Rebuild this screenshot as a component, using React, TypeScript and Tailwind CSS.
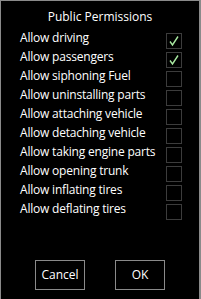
import React from "react";

const perms: { label: string; on: boolean }[] = [
  { label: "Allow driving", on: true },
  { label: "Allow passengers", on: true },
  { label: "Allow siphoning Fuel", on: false },
  { label: "Allow uninstalling parts", on: false },
  { label: "Allow attaching vehicle", on: false },
  { label: "Allow detaching vehicle", on: false },
  { label: "Allow taking engine parts", on: false },
  { label: "Allow opening trunk", on: false },
  { label: "Allow inflating tires", on: false },
  { label: "Allow deflating tires", on: false },
];

const Check: React.FC<{ on: boolean }> = ({ on }) => (
  <div className="w-[16px] h-[16px] border border-[#3c3c3c] flex items-center justify-center">
    {on && (
      <svg width="12" height="12" viewBox="0 0 12 12">
        <path d="M2 6.5 L4.5 10 L10 1.5" fill="none" stroke="#a8e8a0" strokeWidth="1.4" />
      </svg>
    )}
  </div>
);

const App: React.FC = () => {
  return (
    <div className="w-[201px] h-[299px] bg-black border-l border-t border-r-2 border-[#8a8a8a] text-white flex flex-col font-['Open_Sans',sans-serif] text-[12px] leading-[16px]">
      {/* Title */}
      <div className="text-center mt-[8px] h-[16px]">Public Permissions</div>

      {/* Permission rows */}
      <div className="flex flex-col mt-[6px] pl-[19px] pr-[17px]">
        {perms.map((p) => (
          <div key={p.label} className="flex items-center justify-between h-[19px]">
            <span className="tracking-[-0.2px] mb-[6px]">{p.label}</span>
            <Check on={p.on} />
          </div>
        ))}
      </div>

      {/* Buttons */}
      <div className="flex justify-center gap-[30px] mt-[39px]">
        <button className="w-[50px] h-[30px] border border-[#8a8a8a] text-white">Cancel</button>
        <button className="w-[50px] h-[30px] border border-[#8a8a8a] text-white">OK</button>
      </div>
    </div>
  );
};

export default App;
